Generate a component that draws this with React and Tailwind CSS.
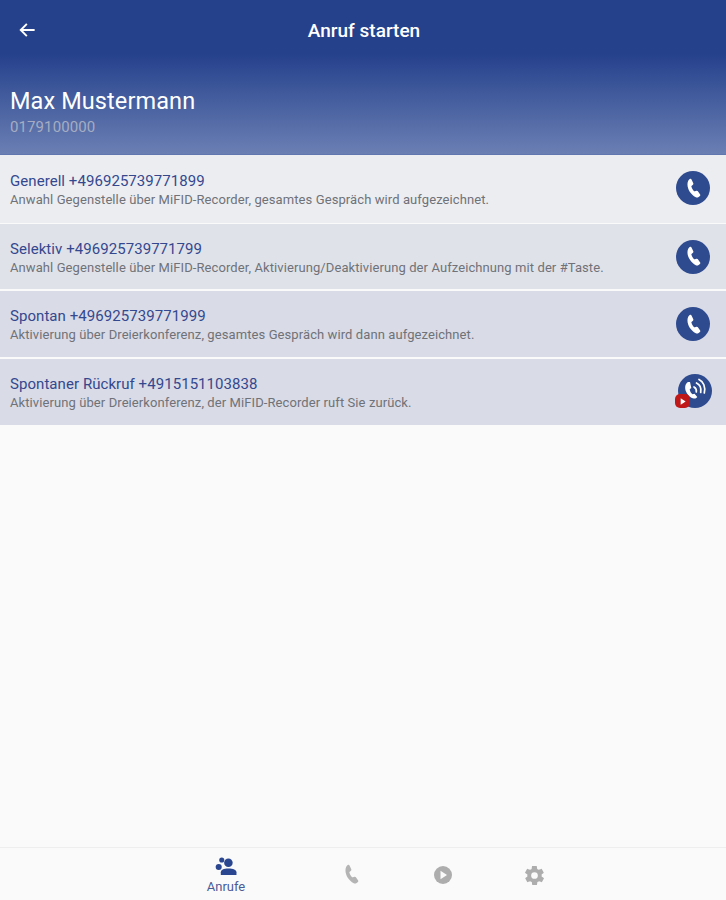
import React from "react";

const Phone = ({ className }) => (
  <svg viewBox="0 0 24 24" className={className} fill="currentColor">
    <path d="M8.500 2.800c.6-.3 1.300-.1 1.600.5l1.700 3.700c.2.500.1 1-.3 1.300l-1.200 1c-.3.300-.4.700-.3 1.100.5 1.500 1.200 2.800 2.300 4 .3.300.7.400 1.100.3l1.500-.5c.5-.2 1 0 1.300.4l2.200 3.100c.3.500.2 1.100-.2 1.400l-1.300 1.100c-.8.600-1.800.7-2.700.2-4.800-2.800-8-7.600-8-12.600 0-2.400 1-4.500 2.800-5.500z" />
  </svg>
);

const Row = ({ title, desc, bg, h, icon, mb }) => (
  <div className={`flex items-center justify-between pl-[10px] pr-[16px] ${bg} ${h} ${mb}`}>
    <div className="flex flex-col pt-[3px]">
      <div className="text-[15px] leading-[19px] text-[#34488f] tracking-[0.06px]">{title}</div>
      <div className="text-[13px] leading-[18px] text-[#6f7278] tracking-[0.09px]">{desc}</div>
    </div>
    {icon}
  </div>
);

const CallIcon = ({ up }) => (
  <div className={`w-[34px] h-[34px] rounded-full bg-[#2f4b8f] flex items-center justify-center text-white ${up ? "-translate-y-px" : ""}`}>
    <Phone className="w-[25px] h-[25px]" />
  </div>
);

const CallbackIcon = () => (
  <div className="relative w-[34px] h-[34px] rounded-full bg-[#2f4b8f] flex items-center justify-center text-white translate-x-[2px] -translate-y-[1px]">
    <svg viewBox="0 0 34 34" className="w-[34px] h-[34px]" fill="none" stroke="currentColor" strokeLinecap="round">
      <path d="M10 8c-3 1.500-3.500 6-2 9.500s4.500 6.500 8 7c1.500.2 2.800-.5 3.300-1.500l-2.800-3.300-2 .5c-1.500-1-2.500-3-2.800-5l1.600-1.200L12 8z" fill="currentColor" stroke="none" />
      <path d="M16 13c1.800 1 2.700 2.800 2.300 5" strokeWidth="1.700" />
      <path d="M18.500 9c3.200 1.500 5 5 4.200 9.500" strokeWidth="1.700" />
      <path d="M21 5.500c4.500 2 6.700 7.500 5.300 13.500" strokeWidth="1.700" />
    </svg>
    <div className="absolute left-[-3px] bottom-[0px] w-[15px] h-[14px] rounded-[5px] bg-[#c01818] flex items-center justify-center">
      <svg viewBox="0 0 10 10" className="w-[9px] h-[9px]" fill="#fff"><path d="M3 1.500v7l5.500-3.500z" /></svg>
    </div>
  </div>
);

export default function App() {
  return (
    <div className="w-full h-[900px] flex flex-col bg-[#fafafa] font-['Roboto',sans-serif]">
      <header className="h-[155px] bg-gradient-to-b from-[#26418c] from-[35%] to-[#6b7fb3] flex flex-col border-b border-[#5f76ae]">
        <div className="relative h-[62px] flex items-center justify-center pt-[1px] pl-[2px]">
          <svg viewBox="0 0 24 24" className="absolute left-[17px] top-[20px] w-[20px] h-[20px]" fill="none" stroke="#fff" strokeWidth="2.300" strokeLinecap="square">
            <path d="M20 12H5M11 5.500 4.500 12l6.500 6.500" />
          </svg>
          <span className="text-[19px] font-medium text-white">Anruf starten</span>
        </div>
        <div className="pl-[10px] pt-[24px]">
          <div className="text-[23.500px] leading-[30px] text-white tracking-[0.1px]">Max Mustermann</div>
          <div className="text-[15px] leading-[20px] mt-[1px] text-[#a6adc2] tracking-[0.1px]">0179100000</div>
        </div>
      </header>
      <Row bg="bg-[#ecedf1]" h="h-[68px]" mb="mb-[1px]" title="Generell +496925739771899" desc="Anwahl Gegenstelle über MiFID-Recorder, gesamtes Gespräch wird aufgezeichnet." icon={<CallIcon up />} />
      <Row bg="bg-[#e0e2e9]" h="h-[65px]" mb="mb-[2px]" title="Selektiv +496925739771799" desc="Anwahl Gegenstelle über MiFID-Recorder, Aktivierung/Deaktivierung der Aufzeichnung mit der #Taste." icon={<CallIcon />} />
      <Row bg="bg-[#d9dbe6]" h="h-[66px]" mb="mb-[2px]" title="Spontan +496925739771999" desc="Aktivierung über Dreierkonferenz, gesamtes Gespräch wird dann aufgezeichnet." icon={<CallIcon />} />
      <Row bg="bg-[#d9dbe6]" h="h-[66px]" title="Spontaner Rückruf +4915151103838" desc="Aktivierung über Dreierkonferenz, der MiFID-Recorder ruft Sie zurück." icon={<CallbackIcon />} />
      <div className="flex-1" />
      <nav className="h-[53px] border-t border-[#eeeeee] flex items-start pt-[9px] pl-[206px]">
        <div className="w-[40px] flex flex-col items-center">
          <svg viewBox="0 0 24 20" className="w-[23px] h-[19px]" fill="#2a4690">
            <circle cx="14" cy="6" r="4.500" />
            <path d="M6 19v-3C6 13.500 9 12 14 12s8.500 1.500 8.500 4v3z" />
            <circle cx="7" cy="3.200" r="2.700" />
            <circle cx="3.800" cy="10.500" r="3.200" />
          </svg>
          <span className="text-[13px] leading-[14px] text-[#4a5c98] mt-[4px]">Anrufe</span>
        </div>
        <Phone className="w-[25px] h-[25px] text-[#b4b4b4] mt-[5px] ml-[93px]" />
        <svg viewBox="0 0 20 20" className="w-[20px] h-[20px] mt-[8px] ml-[69px]">
          <circle cx="10" cy="10" r="9" fill="#adadad" />
          <path d="M7.500 5.800v8.400l6.500-4.200z" fill="#fafafa" />
        </svg>
        <svg viewBox="0 0 24 24" className="w-[23px] h-[23px] mt-[7px] ml-[70px]" fill="#adadad">
          <path fillRule="evenodd" d="M19.400 13c.1-.3.100-.7.100-1s0-.7-.1-1l2.100-1.600c.2-.2.200-.4.100-.6l-2-3.500c-.1-.2-.4-.3-.6-.2l-2.500 1c-.5-.4-1.100-.7-1.700-1l-.4-2.700c0-.2-.2-.4-.5-.4h-4c-.2 0-.4.200-.5.400l-.4 2.700c-.6.300-1.200.6-1.700 1l-2.500-1c-.2-.1-.5 0-.6.200l-2 3.500c-.1.200-.1.400.1.600L4.600 11c0 .3-.1.700-.1 1s0 .7.1 1l-2.100 1.600c-.2.200-.2.400-.1.600l2 3.500c.1.200.4.300.6.200l2.500-1c.5.400 1.100.7 1.700 1l.4 2.700c0 .2.200.4.500.4h4c.2 0 .5-.2.500-.4l.4-2.700c.6-.3 1.200-.6 1.700-1l2.500 1c.2.100.5 0 .6-.2l2-3.500c.1-.2.100-.4-.1-.6zM12 15.500a3.500 3.500 0 1 1 0-7 3.500 3.500 0 0 1 0 7z" />
        </svg>
      </nav>
    </div>
  );
}
